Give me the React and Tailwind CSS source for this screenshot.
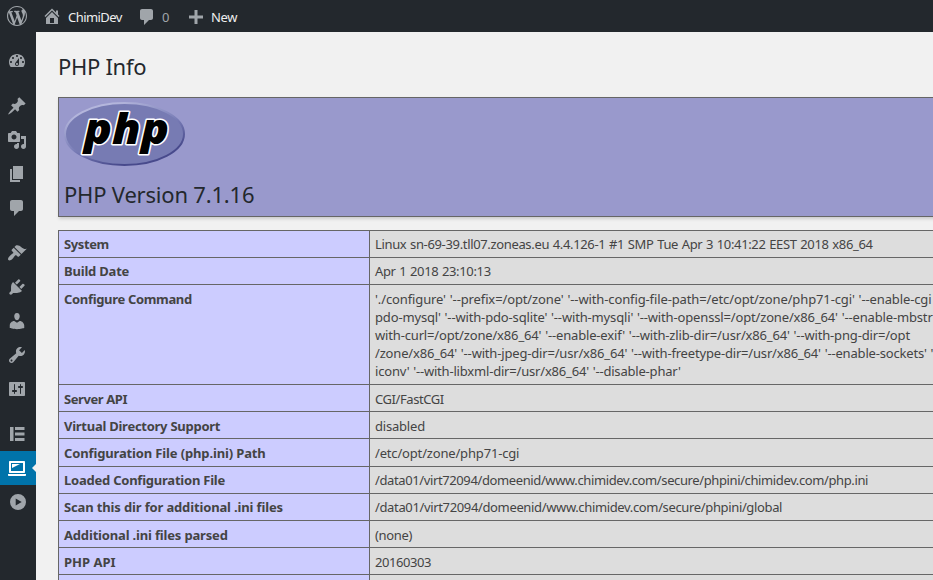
import React from "react";

const FONT = "font-['Noto_Sans',sans-serif]";

const ICONS = {
  wordpress:
    "M20 10c0-5.51-4.49-10-10-10C4.48 0 0 4.49 0 10c0 5.52 4.48 10 10 10 5.51 0 10-4.48 10-10zM7.78 15.37L4.37 6.22c.55-.02 1.17-.08 1.17-.08.5-.06.44-1.13-.06-1.11 0 0-1.45.11-2.37.11-.18 0-.37 0-.58-.01C4.12 2.69 6.87 1.11 10 1.11c2.33 0 4.45.87 6.05 2.34-.68-.11-1.65.39-1.65 1.58 0 .74.45 1.36.9 2.1.35.61.55 1.36.55 2.46 0 1.49-1.4 5-1.4 5l-3.03-8.37c.54-.02.82-.17.82-.17.5-.05.44-1.25-.06-1.22 0 0-1.44.12-2.38.12-.87 0-2.33-.12-2.33-.12-.5-.03-.56 1.2-.06 1.22l.92.08 1.26 3.41zM17.41 10c.24-.64.74-1.87.43-4.25.7 1.29 1.05 2.71 1.05 4.25 0 3.29-1.73 6.24-4.4 7.78.97-2.59 1.94-5.2 2.92-7.78zM6.1 18.09C3.12 16.65 1.11 13.53 1.11 10c0-1.3.23-2.48.72-3.59C3.25 10.3 4.67 14.2 6.1 18.09zm4.03-6.63l2.58 6.98c-.86.29-1.76.45-2.71.45-.79 0-1.57-.11-2.29-.33.81-2.38 1.62-4.74 2.42-7.1z",
  home: "M16 8.5l1.53 1.53-1.06 1.06L10 4.6l-6.47 6.49-1.06-1.06L10 2.5l4 4v-2h2v4zm-6-2.46l6 5.99V18H4v-5.97zM12 17v-5H8v5h4z",
  comments:
    "M5 2h9c1.1 0 2 .9 2 2v7c0 1.1-.9 2-2 2h-2l-5 5v-5H5c-1.1 0-2-.9-2-2V4c0-1.1.9-2 2-2z",
  plus: "M17 8.5v3h-5.5V17h-3v-5.5H3v-3h5.5V3h3v5.5z",
  dashboard:
    "M3.76 16h12.48c1.1-1.37 1.76-3.11 1.76-5 0-4.42-3.58-8-8-8s-8 3.58-8 8c0 1.89.66 3.63 1.76 5zM10 4c.55 0 1 .45 1 1s-.45 1-1 1-1-.45-1-1 .45-1 1-1zM6 6c.55 0 1 .45 1 1s-.45 1-1 1-1-.45-1-1 .45-1 1-1zm8 0c.55 0 1 .45 1 1s-.45 1-1 1-1-.45-1-1 .45-1 1-1zm-5.37 5.55L12 7v6c0 1.1-.9 2-2 2s-2-.9-2-2c0-.57.24-1.08.63-1.45zM4 10c.55 0 1 .45 1 1s-.45 1-1 1-1-.45-1-1 .45-1 1-1zm12 0c.55 0 1 .45 1 1s-.45 1-1 1-1-.45-1-1 .45-1 1-1zm-5 3c0-.55-.45-1-1-1s-1 .45-1 1 .45 1 1 1 1-.45 1-1z",
  post: "M10.44 3.02l1.82-1.82 6.36 6.35-1.83 1.82c-1.05-.68-2.48-.57-3.41.36l-.75.75c-.92.93-1.04 2.35-.35 3.41l-1.83 1.82-2.41-2.41-2.8 2.79c-.42.42-3.38 2.71-3.8 2.29s1.86-3.39 2.28-3.81l2.79-2.79L4.1 9.36l1.83-1.82c1.05.69 2.48.57 3.4-.36l.75-.75c.93-.92 1.05-2.35.36-3.41z",
  media:
    "M13 11V4c0-.55-.45-1-1-1h-1.67L9 1H5L3.67 3H2c-.55 0-1 .45-1 1v7c0 .55.45 1 1 1h10c.55 0 1-.45 1-1zM7 4.5c1.38 0 2.5 1.12 2.5 2.5S8.38 9.5 7 9.5 4.5 8.38 4.5 7 5.62 4.5 7 4.5zM14 6h5v10.5c0 1.38-1.12 2.5-2.5 2.5S14 17.88 14 16.5s1.12-2.5 2.5-2.5c.17 0 .34.02.5.05V9h-3V6zm-4 8.05V13h2v3.5c0 1.38-1.12 2.5-2.5 2.5S7 17.88 7 16.5 8.12 14 9.5 14c.17 0 .34.02.5.05z",
  page: "M6 15V2h10v13H6zm-1 1h8v2H3V5h2v11z",
  appearance:
    "M14.48 11.06L7.41 3.99l1.5-1.5c.5-.56 2.3-.47 3.51.32 1.21.8 1.43 1.28 2.91 2.1 1.18.64 2.45 1.26 4.45.85zm-.71.71L6.7 4.7 4.93 6.47c-.39.39-.39 1.02 0 1.41l1.06 1.06c.39.39.39 1.03 0 1.42-.6.6-1.43 1.11-2.21 1.69-.35.26-.7.53-1.01.84C1.43 14.23.4 16.08 1.4 17.07c.99 1 2.84-.03 4.18-1.36.31-.31.58-.66.85-1.02.57-.78 1.08-1.61 1.69-2.21.39-.39 1.02-.39 1.41 0l1.06 1.06c.39.39 1.02.39 1.41 0z",
  plugins:
    "M13.11 4.36L9.87 7.6 8 5.73l3.24-3.24c.35-.34 1.05-.2 1.56.32.52.51.66 1.21.31 1.55zm-8 1.77l.91-1.12 9.01 9.01-1.19.84c-.71.71-2.63 1.16-3.82 1.16H6.14L4.9 17.26c-.59.59-1.54.59-2.12 0-.59-.58-.59-1.53 0-2.12l1.24-1.24v-3.88c0-1.13.4-3.19 1.09-3.89zm7.26 3.97l3.24-3.24c.34-.35 1.04-.21 1.55.31.52.51.66 1.21.31 1.55l-3.24 3.25z",
  users:
    "M10 9.25c-2.27 0-2.73-3.44-2.73-3.44C7 4.02 7.82 2 9.97 2c2.16 0 2.98 2.02 2.71 3.81 0 0-.41 3.44-2.68 3.44zm0 2.57L12.72 10c2.39 0 4.52 2.33 4.52 4.53v2.49s-3.65 1.13-7.24 1.13c-3.65 0-7.24-1.13-7.24-1.13v-2.49c0-2.25 1.94-4.48 4.47-4.48z",
  tools:
    "M16.68 9.77c-1.34 1.34-3.3 1.67-4.95.99l-5.41 6.52c-.99.99-2.59.99-3.58 0s-.99-2.59 0-3.57l6.52-5.42c-.68-1.65-.35-3.61.99-4.95 1.28-1.28 3.12-1.62 4.72-1.06l-2.89 2.89 2.82 2.82 2.86-2.87c.53 1.58.18 3.39-1.08 4.65zM3.81 16.21c.4.39 1.04.39 1.43 0 .4-.4.4-1.04 0-1.43-.39-.4-1.03-.4-1.43 0-.39.39-.39 1.03 0 1.43z",
  settings:
    "M18 16V4c0-.55-.45-1-1-1H3c-.55 0-1 .45-1 1v12c0 .55.45 1 1 1h14c.55 0 1-.45 1-1zM8 11h1c.55 0 1 .45 1 1s-.45 1-1 1H8v1.5c0 .28-.22.5-.5.5s-.5-.22-.5-.5V13H6c-.55 0-1-.45-1-1s.45-1 1-1h1V5.5c0-.28.22-.5.5-.5s.5.22.5.5V11zm5-2h-1c-.55 0-1-.45-1-1s.45-1 1-1h1V5.5c0-.28.22-.5.5-.5s.5.22.5.5V7h1c.55 0 1 .45 1 1s-.45 1-1 1h-1v5.5c0 .28-.22.5-.5.5s-.5-.22-.5-.5V9z",
  elementor: "M3 3h3.5v14H3zM8 3h9.5v3H8zM8 8.5h9.5v3H8zM8 14h9.5v3H8z",
  laptop:
    "M3 3h14c.6 0 1 .4 1 1v10c0 .6-.4 1-1 1H3c-.6 0-1-.4-1-1V4c0-.6.4-1 1-1zm13 2H4v8h12V5zm-3 1H5v4zm6 11v-1H1v1c0 .6.5 1 1.1 1h15.8c.6 0 1.1-.4 1.1-1z",
  play: "M11 2a8 8 0 1 0 0 16 8 8 0 0 0 0-16zM8.7 6.5l6 3.5-6 3.5z",
};

function Icon({ name, className = "" }) {
  return (
    <svg viewBox="0 0 20 20" className={"size-5 shrink-0 " + className} fill="currentColor" fillRule="evenodd">
      <path d={ICONS[name]} />
    </svg>
  );
}

const MENU = [
  ["dashboard"],
  ["post", "media", "page", "comments"],
  ["appearance", "plugins", "users", "tools", "settings"],
  ["elementor", "laptop", "play"],
];

const ROWS = [
  {
    label: "System",
    h: "h-[27px] pt-[4px]",
    lt: "tracking-[-0.4px]",
    lines: [["Linux sn-69-39.tll07.zoneas.eu 4.4.126-1 #1 SMP Tue Apr 3 10:41:22 EEST 2018 x86_64", "tracking-[-0.345px] [word-spacing:0.6px]"]],
  },
  { label: "Build Date", h: "h-[27px] pt-[4px]", lt: "tracking-[-0.2px]", lines: [["Apr 1 2018 23:10:13", "tracking-[-0.35px] [word-spacing:0.6px]"]] },
  {
    label: "Configure Command",
    h: "h-[100px] pt-[5px]",
    lt: "tracking-[-0.33px]",
    lines: [
      ["'./configure' '--prefix=/opt/zone' '--with-config-file-path=/etc/opt/zone/php71-cgi' '--enable-cgi", "tracking-[-0.12px] [word-spacing:0.6px]"],
      ["pdo-mysql' '--with-pdo-sqlite' '--with-mysqli' '--with-openssl=/opt/zone/x86_64' '--enable-mbstr", "tracking-[-0.155px] [word-spacing:0.6px]"],
      ["with-curl=/opt/zone/x86_64' '--enable-exif' '--with-zlib-dir=/usr/x86_64' '--with-png-dir=/opt", "tracking-[-0.16px] [word-spacing:0.6px]"],
      ["/zone/x86_64' '--with-jpeg-dir=/usr/x86_64' '--with-freetype-dir=/usr/x86_64' '--enable-sockets' '", "tracking-[-0.175px] [word-spacing:0.6px]"],
      ["iconv' '--with-libxml-dir=/usr/x86_64' '--disable-phar'", "tracking-[-0.19px] [word-spacing:0.6px]"],
    ],
  },
  { label: "Server API", h: "h-[27px] pt-[5px]", lt: "tracking-[-0.42px]", lines: [["CGI/FastCGI", "tracking-[-0.42px]"]] },
  { label: "Virtual Directory Support", h: "h-[27px] pt-[5px]", lt: "tracking-[-0.26px]", lines: [["disabled", "tracking-[-0.2px]"]] },
  { label: "Configuration File (php.ini) Path", h: "h-[28px] pt-[5px]", lt: "tracking-[-0.14px]", lines: [["/etc/opt/zone/php71-cgi", "tracking-[-0.17px]"]] },
  {
    label: "Loaded Configuration File",
    h: "h-[27px] pt-[4px]",
    lt: "tracking-[-0.23px]",
    lines: [["/data01/virt72094/domeenid/www.chimidev.com/secure/phpini/chimidev.com/php.ini", "tracking-[-0.385px]"]],
  },
  {
    label: "Scan this dir for additional .ini files",
    h: "h-[27px] pt-[4px]",
    lt: "tracking-[-0.145px]",
    lines: [["/data01/virt72094/domeenid/www.chimidev.com/secure/phpini/global", "tracking-[-0.355px]"]],
  },
  { label: "Additional .ini files parsed", h: "h-[27px] pt-[5px]", lt: "tracking-[-0.17px]", lines: [["(none)", "tracking-[-0.35px]"]] },
  { label: "PHP API", h: "h-[27px] pt-[5px]", lt: "", lines: [["20160303", "tracking-[-0.45px]"]] },
];

function PhpLogo() {
  return (
    <svg viewBox="0 0 122 66" className="h-[66px] w-[122px] overflow-visible">
      <defs>
        <linearGradient id="rim" x1="0.2" y1="0" x2="0.8" y2="1">
          <stop offset="0.1" stopColor="#b4b6dc" />
          <stop offset="0.5" stopColor="#7b7fb8" />
          <stop offset="0.85" stopColor="#484a8c" />
        </linearGradient>
      </defs>
      <ellipse cx="60.5" cy="33" rx="59.5" ry="31" fill="#777bb3" stroke="url(#rim)" strokeWidth="2" />
      <text
        x="20"
        y="42.5"
        textLength="85"
        lengthAdjust="spacingAndGlyphs"
        className="font-['Noto_Sans',sans-serif] text-[43px] font-black italic"
        fill="#000"
        stroke="#fff"
        strokeWidth="3"
        strokeLinejoin="round"
        paintOrder="stroke"
      >
        php
      </text>
    </svg>
  );
}

export default function App() {
  return (
    <div className={"flex h-[580px] w-[933px] flex-col overflow-hidden bg-[#f1f1f1] text-[13px] text-[#444] " + FONT}>
      <header className="flex h-8 shrink-0 items-center bg-[#23282d] text-[#eee]">
        <Icon name="wordpress" className="ml-[7px] text-[#a0a5aa]" />
        <Icon name="home" className="ml-[15px] text-[#a0a5aa]" />
        <span className="ml-[6px] w-[69px] pt-[3px] tracking-[-0.55px]">ChimiDev</span>
        <Icon name="comments" className="mt-[2px] text-[#a0a5aa]" />
        <span className="ml-[5px] w-[24px] pt-[3px] text-[#a0a5aa]">0</span>
        <Icon name="plus" className="mt-px text-[#a0a5aa]" />
        <span className="ml-[5px] pt-[3px] tracking-[-0.3px]">New</span>
      </header>
      <div className="flex min-h-0 flex-1">
        <nav className="flex w-9 shrink-0 flex-col gap-[11px] bg-[#23282d] pt-3 text-[#a0a5aa]">
          {MENU.map((group, i) => (
            <div key={i}>
              {group.map((n) => (
                <div
                  key={n}
                  className={
                    "flex h-[34px] items-center justify-between pl-[7px] " +
                    (n === "laptop" ? "bg-[#0073aa] text-white" : "")
                  }
                >
                  <Icon name={n} />
                  {n === "laptop" && (
                    <svg viewBox="0 0 4 8" className="h-2 w-1" fill="#f1f1f1">
                      <path d="M4 0v8L0 4z" />
                    </svg>
                  )}
                </div>
              ))}
            </div>
          ))}
        </nav>
        <main className="min-w-0 flex-1 overflow-hidden pl-[22px]">
          <h1 className="mt-[19px] h-[46px] text-[22px] leading-[30px] tracking-[-0.3px] text-[#23282d]">PHP Info</h1>
          <section className="h-[120px] w-[900px] border border-[#666] bg-[#9999cc] pl-[5px] pt-[3px] shadow-[1px_2px_3px_#ccc]">
            <PhpLogo />
            <h2 className="mt-[12px] text-[22px] leading-[30px] tracking-[-0.2px] text-[#23282d]">PHP Version 7.1.16</h2>
          </section>
          <section className="mt-[13px] w-[900px] border-l border-[#666] bg-[#ddd] leading-[18px]">
            {ROWS.map((r) => (
              <div key={r.label} className="flex">
                <div className={"w-[311px] shrink-0 border-r border-t border-[#666] bg-[#ccccff] pl-[5px] font-bold " + r.h}>
                  <span className={r.lt}>{r.label}</span>
                </div>
                <div className={"flex-1 border-t border-[#666] pl-[5px] " + r.h}>
                  {r.lines.map(([t, cls]) => (
                    <div key={t} className={"whitespace-nowrap " + cls}>{t}</div>
                  ))}
                </div>
              </div>
            ))}
            <div className="flex">
              <div className="h-[27px] w-[311px] shrink-0 border-r border-t border-[#666] bg-[#ccccff]" />
              <div className="h-[27px] flex-1 border-t border-[#666]" />
            </div>
          </section>
        </main>
      </div>
    </div>
  );
}
